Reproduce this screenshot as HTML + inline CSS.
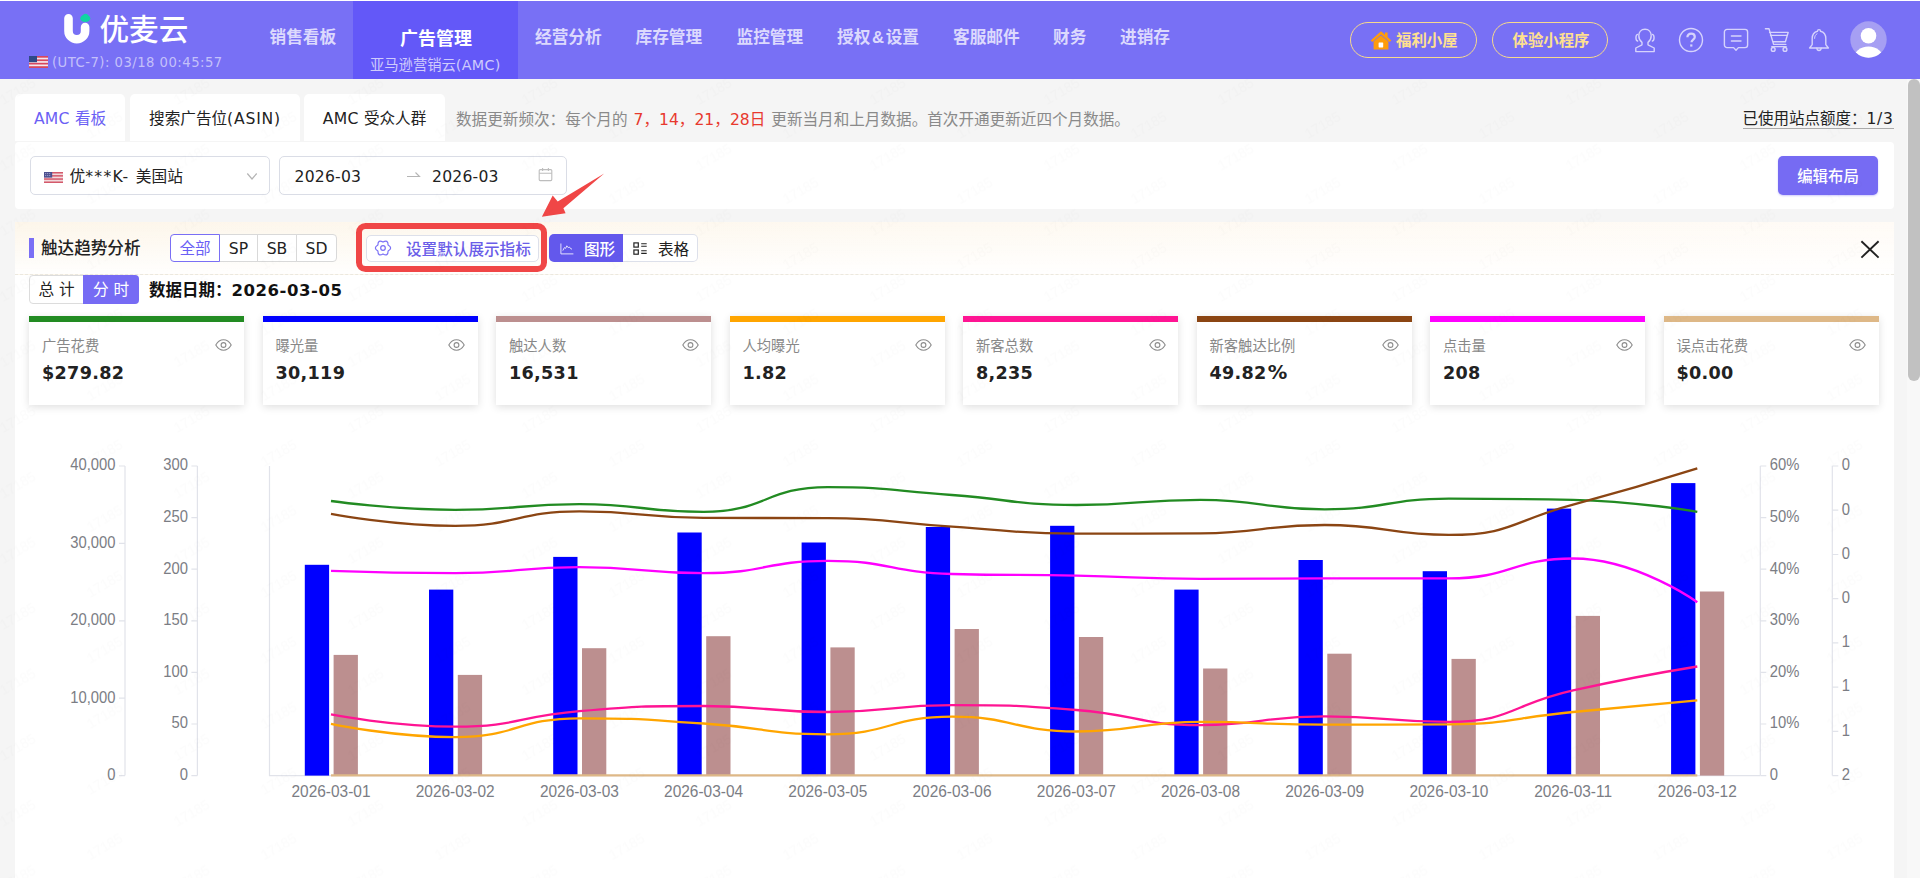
<!DOCTYPE html>
<html lang="zh-CN">
<head>
<meta charset="utf-8">
<title>优麦云 - AMC 看板</title>
<style>
*{box-sizing:border-box;margin:0;padding:0}
html,body{width:1920px;height:878px;overflow:hidden;background:#f5f5f5}
body{position:relative;font-family:"DejaVu Sans","Liberation Sans","Noto Sans CJK SC",sans-serif;color:#222;font-size:15.4px}
.abs{position:absolute}
.t{position:absolute;white-space:nowrap;line-height:1}
/* header */
#hd{position:absolute;left:0;top:1px;width:1920px;height:78px;background:#7870f5}
#hd .act{position:absolute;left:353px;top:0;width:165px;height:78px;background:#6358f8}
.nav{position:absolute;top:27px;font-size:16.7px;font-weight:700;color:#dcd9fd;white-space:nowrap;line-height:20px;font-family:"Liberation Sans","Noto Sans CJK SC",sans-serif}
.pill{position:absolute;top:21px;height:36px;border:1px solid #f7d98c;border-radius:18px;color:#ffe08f;font-weight:700;font-size:15.4px;line-height:36px;white-space:nowrap;font-family:"Liberation Sans","Noto Sans CJK SC",sans-serif}
/* tabs */
.tab{position:absolute;top:94px;height:47px;background:#fff;border-radius:5px 5px 0 0;font-size:15.6px;line-height:50px;text-align:center;white-space:nowrap;color:#222}
.card{position:absolute;background:#fff;border-radius:4px}
.box{position:absolute;background:#fff;border:1px solid #dadde6;border-radius:5px}
.seg{position:absolute;top:234px;height:28px;border:1px solid #d9d9d9;background:#fff;font-size:15.6px;line-height:28px;text-align:center;color:#222}
.kc{position:absolute;top:316px;width:215px;height:89px;background:#fff;box-shadow:0 2px 8px rgba(0,0,0,.13)}
.kc i{position:absolute;left:0;top:0;width:100%;height:6px}
.kc .l{position:absolute;left:13px;top:21.5px;font-size:14.3px;line-height:16px;color:#888;white-space:nowrap}
.kc .v{position:absolute;left:13px;top:47px;font-size:17.6px;line-height:20px;font-weight:700;letter-spacing:.3px;color:#222;white-space:nowrap;font-family:"DejaVu Sans",sans-serif}
.kc svg{position:absolute;right:12.5px;top:23px}
svg{display:block}
</style>
</head>
<body>
<div id="hd">
  <div class="act"></div>
  <!-- logo -->
  <svg class="abs" style="left:60px;top:9px" width="34" height="38" viewBox="60 10 34 38">
    <path d="M68.5 18.3 V30.9 A8.3 8.3 0 0 0 85.1 30.9 V27" fill="none" stroke="#fff" stroke-width="8.6" stroke-linecap="round"/>
    <ellipse cx="85.3" cy="18.3" rx="5" ry="3.7" fill="#10d5a2"/>
    <circle cx="85.6" cy="16.4" r="2.6" fill="#10d5a2"/>
  </svg>
  <div class="t" style="left:99.5px;top:14px;font-size:29.6px;line-height:30px;color:#fff;font-family:'Liberation Sans','Noto Sans CJK SC',sans-serif;font-weight:500">优麦云</div>
  <!-- flag -->
  <svg class="abs" style="left:29px;top:55px" width="19" height="12" viewBox="0 0 19 12">
    <rect width="19" height="12" fill="#f3e9ee"/>
    <g fill="#d8475f"><rect y="0" width="19" height="1.7"/><rect y="3.4" width="19" height="1.7"/><rect y="6.8" width="19" height="1.7"/><rect y="10.2" width="19" height="1.8"/></g>
    <rect width="8" height="6.2" fill="#2f4a86"/>
  </svg>
  <div class="t" style="left:52px;top:54px;font-size:13.2px;line-height:16px;letter-spacing:.48px;color:#c4c0fa">(UTC-7): 03/18 00:45:57</div>
  <!-- nav -->
  <div class="nav" style="left:269.5px">销售看板</div>
  <div class="nav" style="left:400px;top:28px;font-size:18px;color:#fff">广告管理</div>
  <div class="t" style="left:370px;top:55px;font-size:14.3px;line-height:18px;color:#cfcbfc;font-family:'DejaVu Sans','Noto Sans CJK SC',sans-serif">亚马逊营销云<span style="letter-spacing:.35px">(AMC)</span></div>
  <div class="nav" style="left:535px">经营分析</div>
  <div class="nav" style="left:635.5px">库存管理</div>
  <div class="nav" style="left:736.5px">监控管理</div>
  <div class="nav" style="left:837px">授权<span style="letter-spacing:1.6px;margin-left:1.6px">&amp;</span>设置</div>
  <div class="nav" style="left:953px">客服邮件</div>
  <div class="nav" style="left:1053px">财务</div>
  <div class="nav" style="left:1120px">进销存</div>
  <!-- pills -->
  <div class="pill" style="left:1350px;width:127px;padding-left:45px">福利小屋
    <svg class="abs" style="left:18px;top:7px" width="24" height="21" viewBox="0 0 24 21">
      <path d="M12 1.2 L1.6 10.4 L3.4 12 L12 4.6 L20.6 12 L22.4 10.4 L18.6 7 V2.6 H16 V4.8 Z" fill="#ff9c0a"/>
      <path d="M4.6 11.6 L12 5.4 L19.4 11.6 V19.6 H4.6 Z" fill="#ff9c0a"/>
      <rect x="9.6" y="12.4" width="4.6" height="5" rx="0.6" fill="#fff"/>
    </svg>
  </div>
  <div class="pill" style="left:1492px;width:116px;padding-left:19.5px">体验小程序</div>
  <!-- icons -->
  <svg class="abs" style="left:1632px;top:25px" width="26" height="28" viewBox="0 0 26 28" fill="none" stroke="#d6d3fc" stroke-width="1.4" stroke-linejoin="round" stroke-linecap="round">
    <path d="M13 3.2 c-4 0 -6.2 2.9 -6.2 6.6 c0 3 1.4 5.2 3.2 6.6 v2.4 l-6.2 3.2 v3.6 h18.4 v-3.6 l-6.2 -3.2 v-2.4 c1.800 -1.4 3.2 -3.600 3.2 -6.600 c0 -3.700 -2.200 -6.600 -6.200 -6.600 z"/>
    <path d="M5.6 8.4 c-2.200 0.600 -2.200 6 0 6.600 M20.4 8.400 c2.200 0.600 2.200 6 0 6.600"/>
  </svg>
  <svg class="abs" style="left:1678px;top:26px" width="26" height="26" viewBox="0 0 26 26" fill="none" stroke="#d6d3fc" stroke-width="1.4">
    <circle cx="13" cy="13" r="11.5"/>
    <path d="M9.4 10.200 c0 -2.200 1.600 -3.600 3.700 -3.600 c2.100 0 3.700 1.300 3.700 3.300 c0 2.600 -3.300 2.700 -3.300 5.400" stroke-width="2.200"/>
    <rect x="12.200" y="17.400" width="2.200" height="2.200" fill="#d6d3fc" stroke="none"/>
  </svg>
  <svg class="abs" style="left:1722px;top:26px" width="28" height="26" viewBox="0 0 28 26" fill="none" stroke="#d6d3fc" stroke-width="1.4" stroke-linejoin="round" stroke-linecap="round">
    <path d="M5 2.400 h18 a2.600 2.600 0 0 1 2.600 2.600 v13 a2.600 2.600 0 0 1 -2.600 2.600 h-6.600 l-2.400 2.600 l-2.400 -2.600 h-6.600 a2.600 2.600 0 0 1 -2.600 -2.600 v-13 a2.600 2.600 0 0 1 2.600 -2.600 z"/>
    <path d="M9.400 9 h9.600 M9.400 14 h9.600"/>
  </svg>
  <svg class="abs" style="left:1763px;top:25px" width="28" height="28" viewBox="0 0 28 28" fill="none" stroke="#d6d3fc" stroke-width="1.4" stroke-linejoin="round" stroke-linecap="round">
    <path d="M2.400 2.800 h3.600 l4.600 15.600 h12.200 M6.600 6.400 h18.600 l-2.800 9.400 h-12.600"/>
    <path d="M7.400 9.400 h16.600" stroke-width="1.100"/>
    <path d="M8.800 20.600 h14.400"/>
    <circle cx="10.200" cy="23.400" r="1.900"/><circle cx="22" cy="23.400" r="1.900"/>
  </svg>
  <svg class="abs" style="left:1806px;top:25px" width="26" height="28" viewBox="0 0 26 28" fill="none" stroke="#d6d3fc" stroke-width="1.4" stroke-linejoin="round" stroke-linecap="round">
    <path d="M13 3.600 c-0.900 0 -1.500 0.600 -1.500 1.600 c-3.500 0.800 -5.300 3.800 -5.300 7.400 v6 l-2.600 3.400 h18.800 l-2.600 -3.400 v-6 c0 -3.600 -1.800 -6.600 -5.300 -7.400 c0 -1 -0.600 -1.600 -1.500 -1.600 z"/>
    <path d="M10.800 22.200 c0.400 3 4 3 4.400 0"/>
    <path d="M8.600 12.400 c0 -2.400 1 -3.800 2.400 -4.600" stroke-width="1"/>
  </svg>
  <svg class="abs" style="left:1850px;top:20.3px" width="37" height="37" viewBox="0 0 37 37">
    <defs><clipPath id="avc"><circle cx="18.500" cy="18.500" r="18.200"/></clipPath></defs>
    <circle cx="18.500" cy="18.500" r="18.200" fill="#a69ff3"/>
    <g clip-path="url(#avc)" fill="#fff"><circle cx="18.500" cy="14.800" r="7.800"/><ellipse cx="18.500" cy="38" rx="15" ry="12.500"/></g>
  </svg>
</div>
<!-- tabs -->
<div class="tab" style="left:15px;width:110px;color:#6b5ff5"><span style="letter-spacing:.25px">AMC </span>看板</div>
<div class="tab" style="left:130px;width:170px">搜索广告位<span style="letter-spacing:.8px">(ASIN)</span></div>
<div class="tab" style="left:304px;width:141px"><span style="letter-spacing:.3px">AMC </span>受众人群</div>
<div class="t" style="left:456px;top:110px;font-size:15.6px;line-height:20px;word-spacing:1px;color:#8a8a8a">数据更新频次：每个月的 <span style="color:#e8392e">7，14，21，28日</span> 更新当月和上月数据。首次开通更新近四个月数据。</div>
<div class="t" style="left:1742.5px;top:110px;font-size:15.5px;line-height:18px;color:#222;border-bottom:1px solid #aaa;padding-bottom:0px">已使用站点额度：<span style="letter-spacing:.7px">1/3</span></div>
<!-- filter card -->
<div class="card" style="left:15px;top:142px;width:1879px;height:67px"></div>
<div class="box" style="left:30px;top:156.4px;width:240px;height:38.4px">
  <svg class="abs" style="left:13px;top:14.6px" width="19" height="11" viewBox="0 0 19 11">
    <rect width="19" height="11" fill="#f1dadd"/>
    <g fill="#d4596b"><rect y="0" width="19" height="1.500"/><rect y="3.100" width="19" height="1.500"/><rect y="6.300" width="19" height="1.500"/><rect y="9.500" width="19" height="1.500"/></g>
    <rect width="8.200" height="5.600" fill="#4c4f8f"/><path d="M1.200 1.600 h6 M1.200 3.600 h6" stroke="#c9cbe6" stroke-width=".8" stroke-dasharray="1 1"/>
  </svg>
  <div class="t" style="left:38.5px;top:9.6px;font-size:15.7px;line-height:20px;color:#222">优<span style="letter-spacing:1.3px">***K- </span>美国站</div>
  <svg class="abs" style="left:215px;top:15px" width="12" height="9" viewBox="0 0 12 9" fill="none" stroke="#b4b4b4" stroke-width="1.200"><path d="M1.300 1.500 L6 7 L10.700 1.500"/></svg>
</div>
<div class="box" style="left:279px;top:156.4px;width:288px;height:38.4px">
  <div class="t" style="left:14.500px;top:9.6px;font-size:15.6px;line-height:20px;letter-spacing:.22px;color:#222">2026-03</div>
  <svg class="abs" style="left:126px;top:13px" width="15" height="10" viewBox="0 0 15 10" fill="none" stroke="#b5b5b5" stroke-width="1.100"><path d="M1 6.500 H13.500 L9.500 2.500"/></svg>
  <div class="t" style="left:152px;top:9.6px;font-size:15.6px;line-height:20px;letter-spacing:.22px;color:#222">2026-03</div>
  <svg class="abs" style="left:258px;top:10px" width="15" height="15" viewBox="0 0 15 15" fill="none" stroke="#bdbdbd" stroke-width="1.100"><rect x="1.200" y="2.600" width="12.600" height="11" rx="1"/><path d="M1.200 6.200 H13.800 M4.600 1 V4 M10.400 1 V4"/></svg>
</div>
<div class="abs" style="left:1778px;top:156px;width:100px;height:39px;background:#766bf3;border-radius:5px;color:#fff;font-size:15.4px;font-weight:500;line-height:43px;box-shadow:0 1px 2px rgba(118,107,243,.35);text-align:center;white-space:nowrap">编辑布局</div>
<!-- section card -->
<div class="card" style="left:15px;top:222px;width:1879px;height:700px;border-radius:0"></div>
<div class="abs" style="left:15px;top:222px;width:1879px;height:53px;background:linear-gradient(180deg,rgba(255,255,255,0) 0%,rgba(255,255,255,.45) 50%,rgba(255,255,255,.92) 100%),linear-gradient(90deg,#fdf6ea 0%,#fef9f1 50%,#fffbf6 100%);border-bottom:1px dashed #ebe8df"></div>
<div class="abs" style="left:29px;top:238px;width:5px;height:20px;background:#7a6ff5"></div>
<div class="t" style="left:41px;top:239px;font-size:16.6px;line-height:20px;color:#222;font-weight:500">触达趋势分析</div>
<div class="seg" style="left:170px;width:50px;border-color:#7a6ff5;color:#6b5ff5;border-radius:4px 0 0 4px;z-index:2">全部</div>
<div class="seg" style="left:219px;width:39px">SP</div>
<div class="seg" style="left:257px;width:40px">SB</div>
<div class="seg" style="left:296px;width:41px;border-radius:0 4px 4px 0">SD</div>
<!-- settings button -->
<div class="abs" style="left:366px;top:234.500px;width:173px;height:27px;background:#fff;border:1px solid #dde0ea;border-radius:5px"></div>
<svg class="abs" style="left:374px;top:238.600px" width="18" height="18" viewBox="0 0 18 18" fill="none" stroke="#7a6ff5" stroke-width="1.200" stroke-linejoin="round">
  <path transform="rotate(30 9 9)" d="M6.05 3.89 Q9.00 -1.20 11.95 3.89 Q17.83 3.90 14.90 9.00 Q17.83 14.10 11.95 14.11 Q9.00 19.20 6.05 14.11 Q0.17 14.10 3.10 9.00 Q0.17 3.90 6.05 3.89 Z"/>
  <circle cx="9" cy="9" r="2.300"/>
</svg>
<div class="t" style="left:406px;top:240px;font-size:15.6px;line-height:20px;color:#6a5de8;font-weight:500">设置默认展示指标</div>
<!-- red highlight -->
<div class="abs" style="left:355.5px;top:222.8px;width:191.5px;height:48.9px;border:6px solid #f04646;border-radius:9.5px"></div>
<svg class="abs" style="left:536px;top:168px" width="74" height="54" viewBox="536 168 74 54"><path d="M541.900 216.800 L552.700 195.600 L557.700 201.600 L604.200 173.500 L563.400 208.300 L565.600 213.200 Z" fill="#f04646"/></svg>
<!-- view toggle -->
<div class="abs" style="left:549px;top:234px;width:74px;height:28px;background:#6358ec;border-radius:5px 0 0 5px"></div>
<svg class="abs" style="left:559.5px;top:242.6px" width="14" height="12" viewBox="0 0 14 12" fill="none" stroke="#e4e1fd" stroke-width="1"><path d="M0.9 0.5 V10.9 H13.4"/><path d="M2.8 7.6 L4.4 4.6 L5.6 5.4 L6.8 2.8 L8.2 4.6 L9.4 4 L10.6 5.6 L12 6.2"/></svg>
<div class="t" style="left:584px;top:239.5px;font-size:15.6px;line-height:20px;color:#fff;font-weight:500">图形</div>
<div class="abs" style="left:623px;top:234px;width:74.500px;height:28px;background:#fff;border:1px solid #dde0ea;border-left:none;border-radius:0 5px 5px 0"></div>
<svg class="abs" style="left:633.3px;top:242px" width="15" height="13" viewBox="0 0 15 13" fill="none" stroke="#222" stroke-width="1.2"><rect x="0.9" y="0.9" width="4.4" height="4.2"/><rect x="0.9" y="8" width="4.400" height="4.200"/><path d="M8.2 1.7 H13.7 M8.2 4.3 H13.7 M8.2 8.800 H13.700 M8.2 11.400 H13.700" stroke-width="1.1"/></svg>
<div class="t" style="left:658px;top:239.5px;font-size:15.6px;line-height:20px;color:#222">表格</div>
<!-- close -->
<svg class="abs" style="left:1859px;top:238px" width="23" height="23" viewBox="0 0 23 23" stroke="#222" stroke-width="1.9" fill="none"><path d="M2.4 3.3 L19.6 19.6 M19.6 3.3 L2.4 19.6"/></svg>
<!-- total / hourly -->
<div class="abs" style="left:29px;top:275px;width:55px;height:29px;background:#fff;border:1px solid #dcdcdc;border-radius:4px 0 0 4px;font-size:15.6px;line-height:29px;text-align:center;color:#222;white-space:nowrap">总 计</div>
<div class="abs" style="left:83px;top:275px;width:56px;height:29px;background:#766bf4;border-radius:0 4px 4px 0;font-size:15.6px;line-height:31px;text-align:center;color:#fff;white-space:nowrap">分 时</div>
<div class="t" style="left:149px;top:281px;font-size:16.5px;line-height:20px;color:#111;font-weight:700;font-family:'DejaVu Sans','Noto Sans CJK SC',sans-serif">数据日期：<span style="letter-spacing:.55px">2026-03-05</span></div>
<div class="kc" style="left:29.0px"><i style="background:#228b22"></i><div class="l">广告花费</div><div class="v">$279.82</div><svg width="17" height="12" viewBox="0 0 17 12" fill="none" stroke="#8c8c8c" stroke-width="1.1"><path d="M0.800 6 C3 2.200 5.600 0.800 8.500 0.800 C11.400 0.800 14 2.200 16.200 6 C14 9.800 11.400 11.200 8.500 11.200 C5.600 11.200 3 9.800 0.800 6 Z"/><circle cx="8.500" cy="6" r="2.400"/></svg></div>
<div class="kc" style="left:262.5px"><i style="background:#0000ff"></i><div class="l">曝光量</div><div class="v">30,119</div><svg width="17" height="12" viewBox="0 0 17 12" fill="none" stroke="#8c8c8c" stroke-width="1.1"><path d="M0.800 6 C3 2.200 5.600 0.800 8.500 0.800 C11.400 0.800 14 2.200 16.200 6 C14 9.800 11.400 11.200 8.500 11.200 C5.600 11.200 3 9.800 0.800 6 Z"/><circle cx="8.500" cy="6" r="2.400"/></svg></div>
<div class="kc" style="left:496.0px"><i style="background:#bc8f8f"></i><div class="l">触达人数</div><div class="v">16,531</div><svg width="17" height="12" viewBox="0 0 17 12" fill="none" stroke="#8c8c8c" stroke-width="1.1"><path d="M0.800 6 C3 2.200 5.600 0.800 8.500 0.800 C11.400 0.800 14 2.200 16.200 6 C14 9.800 11.400 11.200 8.500 11.200 C5.600 11.200 3 9.800 0.800 6 Z"/><circle cx="8.500" cy="6" r="2.400"/></svg></div>
<div class="kc" style="left:729.5px"><i style="background:#ffa500"></i><div class="l">人均曝光</div><div class="v">1.82</div><svg width="17" height="12" viewBox="0 0 17 12" fill="none" stroke="#8c8c8c" stroke-width="1.1"><path d="M0.800 6 C3 2.200 5.600 0.800 8.500 0.800 C11.400 0.800 14 2.200 16.200 6 C14 9.800 11.400 11.200 8.500 11.200 C5.600 11.200 3 9.800 0.800 6 Z"/><circle cx="8.500" cy="6" r="2.400"/></svg></div>
<div class="kc" style="left:963.0px"><i style="background:#ff1493"></i><div class="l">新客总数</div><div class="v">8,235</div><svg width="17" height="12" viewBox="0 0 17 12" fill="none" stroke="#8c8c8c" stroke-width="1.1"><path d="M0.800 6 C3 2.200 5.600 0.800 8.500 0.800 C11.400 0.800 14 2.200 16.200 6 C14 9.800 11.400 11.200 8.500 11.200 C5.600 11.200 3 9.800 0.800 6 Z"/><circle cx="8.500" cy="6" r="2.400"/></svg></div>
<div class="kc" style="left:1196.5px"><i style="background:#8b4513"></i><div class="l">新客触达比例</div><div class="v">49.82<span style="margin-left:1px;font-size:19.5px">%</span></div><svg width="17" height="12" viewBox="0 0 17 12" fill="none" stroke="#8c8c8c" stroke-width="1.1"><path d="M0.800 6 C3 2.200 5.600 0.800 8.500 0.800 C11.400 0.800 14 2.200 16.200 6 C14 9.800 11.400 11.200 8.500 11.200 C5.600 11.200 3 9.800 0.800 6 Z"/><circle cx="8.500" cy="6" r="2.400"/></svg></div>
<div class="kc" style="left:1430.0px"><i style="background:#ff00ff"></i><div class="l">点击量</div><div class="v">208</div><svg width="17" height="12" viewBox="0 0 17 12" fill="none" stroke="#8c8c8c" stroke-width="1.1"><path d="M0.800 6 C3 2.200 5.600 0.800 8.500 0.800 C11.400 0.800 14 2.200 16.200 6 C14 9.800 11.400 11.200 8.500 11.200 C5.600 11.200 3 9.800 0.800 6 Z"/><circle cx="8.500" cy="6" r="2.400"/></svg></div>
<div class="kc" style="left:1663.5px"><i style="background:#deb887"></i><div class="l">误点击花费</div><div class="v">$0.00</div><svg width="17" height="12" viewBox="0 0 17 12" fill="none" stroke="#8c8c8c" stroke-width="1.1"><path d="M0.800 6 C3 2.200 5.600 0.800 8.500 0.800 C11.400 0.800 14 2.200 16.200 6 C14 9.800 11.400 11.200 8.500 11.200 C5.600 11.200 3 9.800 0.800 6 Z"/><circle cx="8.500" cy="6" r="2.400"/></svg></div>
<svg class="abs" style="left:0;top:430px" width="1920" height="448" viewBox="0 430 1920 448" font-family="Liberation Sans, sans-serif" font-size="16" fill="#7b7d84">
<path d="M125 466.0 V775.6 M125 466.0 h-6 M125 543.4 h-6 M125 620.8 h-6 M125 698.2 h-6 M125 775.6 h-6" stroke="#e1e3ea" stroke-width="1.2" fill="none"/>
<text transform="translate(115.5 470.3) scale(.925 1)" text-anchor="end">40,000</text><text transform="translate(115.5 547.7) scale(.925 1)" text-anchor="end">30,000</text><text transform="translate(115.5 625.1) scale(.925 1)" text-anchor="end">20,000</text><text transform="translate(115.5 702.5) scale(.925 1)" text-anchor="end">10,000</text><text transform="translate(115.5 779.9) scale(.925 1)" text-anchor="end">0</text>
<path d="M197.4 466.0 V775.6 M197.4 466.0 h-6 M197.4 517.6 h-6 M197.4 569.2 h-6 M197.4 620.8 h-6 M197.4 672.4 h-6 M197.4 724.0 h-6 M197.4 775.6 h-6" stroke="#e1e3ea" stroke-width="1.2" fill="none"/>
<text transform="translate(187.9 470.3) scale(.925 1)" text-anchor="end">300</text><text transform="translate(187.9 521.9) scale(.925 1)" text-anchor="end">250</text><text transform="translate(187.9 573.5) scale(.925 1)" text-anchor="end">200</text><text transform="translate(187.9 625.1) scale(.925 1)" text-anchor="end">150</text><text transform="translate(187.9 676.7) scale(.925 1)" text-anchor="end">100</text><text transform="translate(187.9 728.3) scale(.925 1)" text-anchor="end">50</text><text transform="translate(187.9 779.9) scale(.925 1)" text-anchor="end">0</text>
<path d="M1760.3 466.0 V775.6 M1760.3 466.0 h6 M1760.3 517.6 h6 M1760.3 569.2 h6 M1760.3 620.8 h6 M1760.3 672.4 h6 M1760.3 724.0 h6 M1760.3 775.6 h6" stroke="#e1e3ea" stroke-width="1.2" fill="none"/>
<text transform="translate(1769.8 470.3) scale(.925 1)">60%</text><text transform="translate(1769.8 521.9) scale(.925 1)">50%</text><text transform="translate(1769.8 573.5) scale(.925 1)">40%</text><text transform="translate(1769.8 625.1) scale(.925 1)">30%</text><text transform="translate(1769.8 676.7) scale(.925 1)">20%</text><text transform="translate(1769.8 728.3) scale(.925 1)">10%</text><text transform="translate(1769.8 779.9) scale(.925 1)">0</text>
<path d="M1832.3 466.0 V775.6 M1832.3 466.0 h6 M1832.3 510.2 h6 M1832.3 554.5 h6 M1832.3 598.7 h6 M1832.3 642.9 h6 M1832.3 687.1 h6 M1832.3 731.4 h6 M1832.3 775.6 h6" stroke="#e1e3ea" stroke-width="1.2" fill="none"/>
<text transform="translate(1841.8 470.3) scale(.925 1)">0</text><text transform="translate(1841.8 514.5) scale(.925 1)">0</text><text transform="translate(1841.8 558.8) scale(.925 1)">0</text><text transform="translate(1841.8 603.0) scale(.925 1)">0</text><text transform="translate(1841.8 647.2) scale(.925 1)">1</text><text transform="translate(1841.8 691.4) scale(.925 1)">1</text><text transform="translate(1841.8 735.7) scale(.925 1)">1</text><text transform="translate(1841.8 779.9) scale(.925 1)">2</text>
<path d="M269.5 466.0 V775.6 H1760.0" stroke="#e1e3ea" stroke-width="1.2" fill="none"/>
<rect x="304.8" y="564.8" width="24.3" height="210.8" fill="#0000ff"/><rect x="333.6" y="654.9" width="24.3" height="120.7" fill="#bc8f8f"/>
<rect x="429.0" y="589.6" width="24.3" height="186.0" fill="#0000ff"/><rect x="457.8" y="674.9" width="24.3" height="100.7" fill="#bc8f8f"/>
<rect x="553.2" y="556.9" width="24.3" height="218.7" fill="#0000ff"/><rect x="582.0" y="648.2" width="24.3" height="127.4" fill="#bc8f8f"/>
<rect x="677.4" y="532.5" width="24.3" height="243.1" fill="#0000ff"/><rect x="706.2" y="636.2" width="24.3" height="139.4" fill="#bc8f8f"/>
<rect x="801.6" y="542.5" width="24.3" height="233.1" fill="#0000ff"/><rect x="830.4" y="647.4" width="24.3" height="128.2" fill="#bc8f8f"/>
<rect x="925.8" y="527" width="24.3" height="248.6" fill="#0000ff"/><rect x="954.6" y="629" width="24.3" height="146.6" fill="#bc8f8f"/>
<rect x="1050.1" y="525.8" width="24.3" height="249.8" fill="#0000ff"/><rect x="1078.9" y="637" width="24.3" height="138.6" fill="#bc8f8f"/>
<rect x="1174.3" y="589.6" width="24.3" height="186.0" fill="#0000ff"/><rect x="1203.1" y="668.5" width="24.3" height="107.1" fill="#bc8f8f"/>
<rect x="1298.5" y="560" width="24.3" height="215.6" fill="#0000ff"/><rect x="1327.3" y="653.7" width="24.3" height="121.9" fill="#bc8f8f"/>
<rect x="1422.7" y="571.2" width="24.3" height="204.4" fill="#0000ff"/><rect x="1451.5" y="658.9" width="24.3" height="116.7" fill="#bc8f8f"/>
<rect x="1546.9" y="508.6" width="24.3" height="267.0" fill="#0000ff"/><rect x="1575.7" y="615.9" width="24.3" height="159.7" fill="#bc8f8f"/>
<rect x="1671.1" y="483.1" width="24.3" height="292.5" fill="#0000ff"/><rect x="1699.9" y="591.5" width="24.3" height="184.1" fill="#bc8f8f"/>
<path d="M331.0 501.0 C331.0 501.0 393.1 509.8 455.2 509.8 C517.3 509.8 517.3 504.2 579.4 504.2 C641.5 504.2 642.1 511.8 703.6 511.8 C766.3 511.8 765.2 487.1 827.8 487.1 C889.4 487.1 890.0 490.5 952.0 495.0 C1014.2 499.5 1014.1 505.0 1076.3 505.0 C1138.3 505.0 1138.4 499.8 1200.5 499.8 C1262.6 499.8 1262.6 509.4 1324.7 509.4 C1386.8 509.4 1386.7 498.6 1448.9 498.6 C1510.9 498.6 1511.1 498.6 1573.1 499.8 C1635.3 501.0 1697.3 511.8 1697.3 511.8" fill="none" stroke="#228b22" stroke-width="2.3"/>
<path d="M331.0 513.8 C331.0 513.8 393.2 525.8 455.2 525.8 C517.4 525.8 517.1 511.4 579.4 511.4 C641.4 511.4 641.5 517.4 703.6 517.8 C765.7 518.2 765.8 517.8 827.8 518.2 C890.0 518.6 889.9 522.7 952.0 526.6 C1014.1 530.5 1014.1 533.7 1076.3 533.7 C1138.3 533.7 1138.4 533.7 1200.5 533.3 C1262.6 532.9 1262.6 525.0 1324.7 525.0 C1386.8 525.0 1387.6 534.9 1448.9 534.9 C1511.8 534.9 1511.4 521.1 1573.1 504.6 C1635.6 487.8 1697.3 468.3 1697.3 468.3" fill="none" stroke="#8b4513" stroke-width="2.3"/>
<path d="M331.0 570.8 C331.0 570.8 393.1 573.2 455.2 573.2 C517.3 573.2 517.3 567.2 579.4 567.2 C641.5 567.2 641.6 573.2 703.6 573.2 C765.8 573.2 765.8 560.8 827.8 560.8 C890.0 560.8 889.8 572.4 952.0 574.0 C1014.0 575.6 1014.2 574.4 1076.3 575.6 C1138.4 576.8 1138.3 578.8 1200.5 578.8 C1262.6 578.8 1262.6 578.4 1324.7 578.4 C1386.8 578.4 1387.2 578.4 1448.9 578.4 C1511.4 578.4 1512.4 558.5 1573.1 558.5 C1636.6 558.5 1697.3 602.3 1697.3 602.3" fill="none" stroke="#ff00ff" stroke-width="2.3"/>
<path d="M331.0 714.4 C331.0 714.4 393.2 726.7 455.2 726.7 C517.4 726.7 517.1 716.4 579.4 711.2 C641.3 706.0 641.5 706.0 703.6 706.0 C765.7 706.0 765.7 712.0 827.8 712.0 C890.0 712.0 889.9 705.2 952.0 705.2 C1014.1 705.2 1014.4 705.2 1076.3 710.0 C1138.6 714.8 1138.2 725.1 1200.5 725.1 C1262.4 725.1 1262.5 716.3 1324.7 716.3 C1386.7 716.3 1387.7 721.9 1448.9 721.9 C1511.9 721.9 1510.6 704.3 1573.1 690.4 C1634.8 676.6 1697.3 666.5 1697.3 666.5" fill="none" stroke="#ff1493" stroke-width="2.3"/>
<path d="M331.0 723.9 C331.0 723.9 393.3 737.1 455.2 737.1 C517.5 737.1 517.0 718.3 579.4 718.3 C641.2 718.3 641.6 719.5 703.6 723.5 C765.8 727.5 765.9 734.3 827.8 734.3 C890.1 734.3 889.9 716.7 952.0 716.7 C1014.1 716.7 1014.0 731.5 1076.3 731.5 C1138.2 731.5 1138.3 721.9 1200.5 721.9 C1262.5 721.9 1262.6 724.7 1324.7 724.7 C1386.8 724.7 1386.9 724.7 1448.9 724.3 C1511.1 723.9 1511.0 718.0 1573.1 712.0 C1635.2 706.0 1697.3 700.4 1697.3 700.4" fill="none" stroke="#ffa500" stroke-width="2.3"/>
<path d="M331.0 775.3000000000001 H1697.3" stroke="#deb887" stroke-width="2.2" fill="none"/>
<text transform="translate(331.0 797) scale(.965 1)" text-anchor="middle">2026-03-01</text><text transform="translate(455.2 797) scale(.965 1)" text-anchor="middle">2026-03-02</text><text transform="translate(579.4 797) scale(.965 1)" text-anchor="middle">2026-03-03</text><text transform="translate(703.6 797) scale(.965 1)" text-anchor="middle">2026-03-04</text><text transform="translate(827.8 797) scale(.965 1)" text-anchor="middle">2026-03-05</text><text transform="translate(952.0 797) scale(.965 1)" text-anchor="middle">2026-03-06</text><text transform="translate(1076.3 797) scale(.965 1)" text-anchor="middle">2026-03-07</text><text transform="translate(1200.5 797) scale(.965 1)" text-anchor="middle">2026-03-08</text><text transform="translate(1324.7 797) scale(.965 1)" text-anchor="middle">2026-03-09</text><text transform="translate(1448.9 797) scale(.965 1)" text-anchor="middle">2026-03-10</text><text transform="translate(1573.1 797) scale(.965 1)" text-anchor="middle">2026-03-11</text><text transform="translate(1697.3 797) scale(.965 1)" text-anchor="middle">2026-03-12</text>
</svg>
<svg class="abs" style="left:0;top:79px;pointer-events:none" width="1907" height="799" viewBox="0 79 1907 799"><defs><pattern id="wm" x="20" y="43.4" width="174" height="65.6" patternUnits="userSpaceOnUse"><g font-family="Liberation Sans, sans-serif" font-size="14" fill="#000" fill-opacity=".013" text-anchor="middle"><text transform="translate(87 20) rotate(-30)">17185</text><text transform="translate(0 52) rotate(-30)">17185</text><text transform="translate(174 52) rotate(-30)">17185</text></g></pattern></defs><rect x="0" y="79" width="1907" height="799" fill="url(#wm)"/></svg>
<div class="abs" style="left:1907px;top:79px;width:13px;height:799px;background:#f8f8f8"></div>
<div class="abs" style="left:1908px;top:79px;width:12px;height:302px;background:#c1c1c1;border-radius:6px"></div>
<div class="abs" style="left:0;top:0;width:1920px;height:1px;background:#fff"></div>
</body>
</html>
